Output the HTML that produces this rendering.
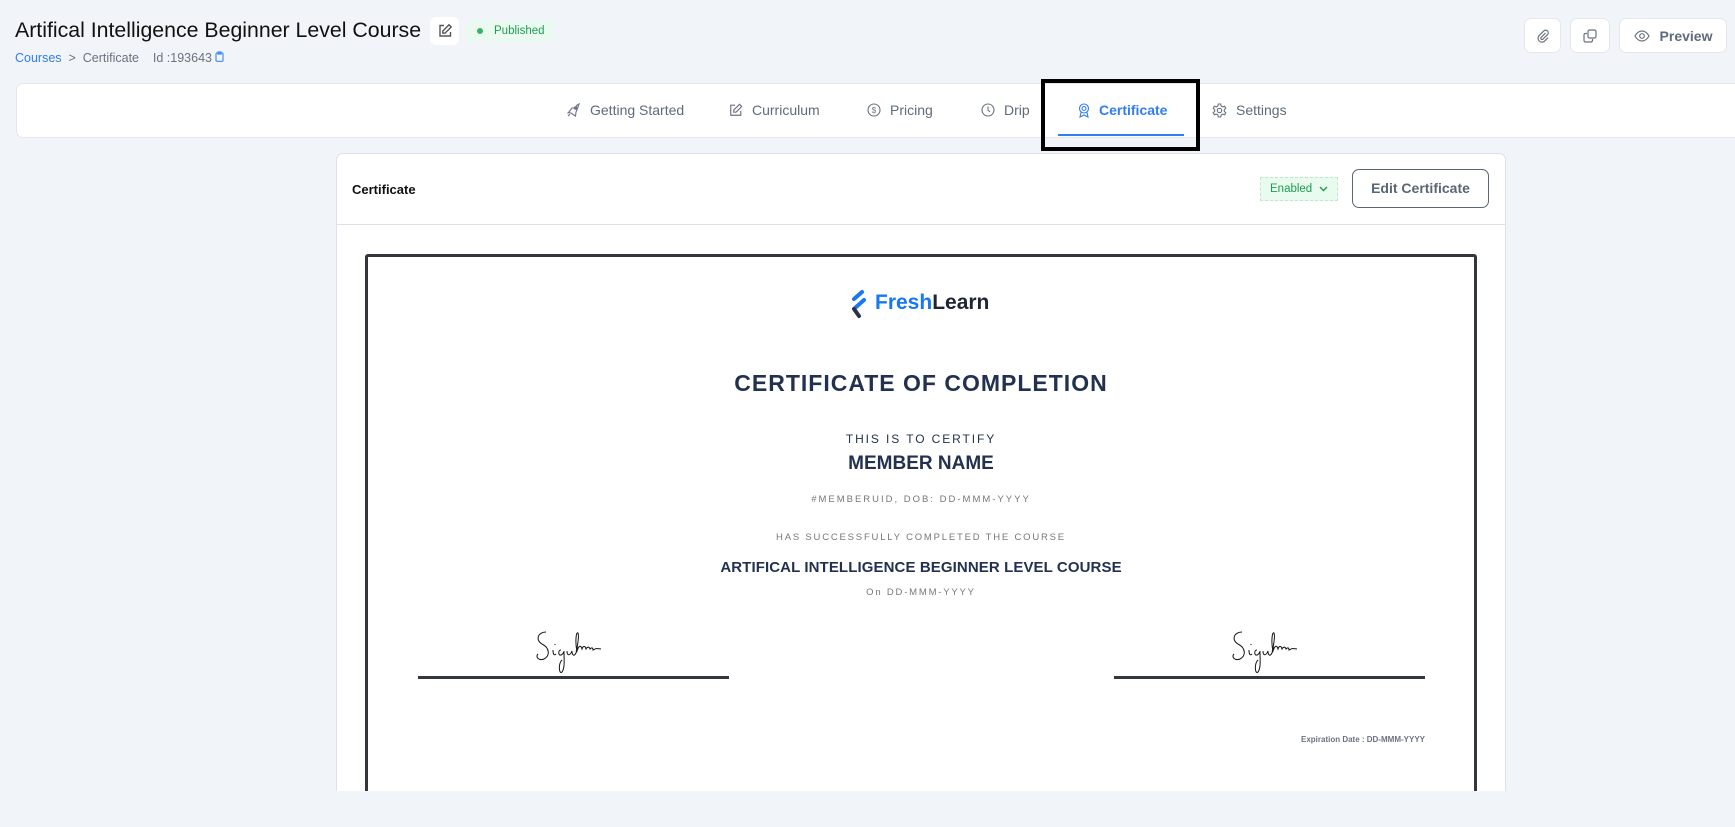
<!DOCTYPE html>
<html><head><meta charset="utf-8"><style>
*{box-sizing:border-box;margin:0;padding:0}
body{width:1735px;height:827px;overflow:hidden;background:#f1f4f9;font-family:"Liberation Sans",sans-serif;position:relative}
.a{position:absolute}
.btn{position:absolute;background:#fff;border:1px solid #e3e7ee;border-radius:7px;display:flex;align-items:center;justify-content:center}
.tab{position:absolute;top:101px;font-size:14px;color:#5f6b7a;display:flex;align-items:center;height:18px}
.tab svg{margin-right:9px}
.c{position:absolute;left:365px;width:1112px;text-align:center}
</style></head><body>
<div class="a" style="left:15px;top:18px;font-size:21.3px;color:#111;">Artifical Intelligence Beginner Level Course</div>
<div class="btn" style="left:430px;top:17px;width:29px;height:28px;border:none;border-radius:6px">
<svg width="16" height="16" viewBox="0 0 16 16" fill="none" stroke="#555" stroke-width="1.4"><path d="M7 2.5H3v10.5h10.5V9"/><path d="M12 1.8l2.2 2.2L8 10.2H5.8V8z"/></svg></div>
<div class="a" style="left:466px;top:20px;width:89px;height:22px;background:#eafaf0;border-radius:5px;font-size:11.5px;color:#1e9c55;line-height:22px;padding-left:28px"><span style="position:absolute;left:11px;top:8px;width:6px;height:6px;border-radius:50%;background:#3bb265"></span>Published</div>
<div class="a" style="left:15px;top:51px;font-size:12.5px;color:#6b7280"><span style="color:#2f7ff0">Courses</span>&nbsp;&nbsp;&gt;&nbsp;&nbsp;Certificate&nbsp;&nbsp;&nbsp;&nbsp;Id :193643 <svg width="9" height="11" viewBox="0 0 9 11" fill="none" stroke="#4a8cf0" stroke-width="1.2"><rect x="1" y="2" width="7" height="8.3" rx="1"/><path d="M3 1h3v2H3z"/></svg></div>

<div class="btn" style="left:1524px;top:18px;width:37px;height:35px"><svg width="14" height="14" viewBox="0 0 14 14" fill="none" stroke="#6b7280" stroke-width="1.2"><path d="M9.5 4L5 8.5a1.3 1.3 0 0 0 1.8 1.8L11.5 5.6a2.6 2.6 0 0 0-3.7-3.7L3 6.7a3.9 3.9 0 0 0 5.5 5.5L12 8.7"/></svg></div>
<div class="btn" style="left:1570px;top:18px;width:40px;height:35px"><svg width="14" height="14" viewBox="0 0 14 14" fill="none" stroke="#6b7280" stroke-width="1.2"><rect x="5" y="1" width="8" height="8" rx="1.5"/><path d="M4 4.5H2.5A1.5 1.5 0 0 0 1 6v5.5A1.5 1.5 0 0 0 2.5 13H8a1.5 1.5 0 0 0 1.5-1.5V10"/></svg></div>
<div class="btn" style="left:1619px;top:18px;width:108px;height:35px;font-size:14px;font-weight:bold;color:#5f6b7a"><svg width="16" height="12" viewBox="0 0 16 12" fill="none" stroke="#6b7280" stroke-width="1.2" style="margin-right:10px"><path d="M1 6c2-3.5 4.5-5 7-5s5 1.5 7 5c-2 3.5-4.5 5-7 5S3 9.5 1 6z"/><circle cx="8" cy="6" r="2.3"/></svg>Preview</div>

<div class="a" style="left:16px;top:83px;width:1730px;height:55px;background:#fff;border:1px solid #e3e7ee;border-radius:7px"></div>
<div class="tab" style="left:566px"><svg width="15" height="15" viewBox="0 0 15 15" fill="none" stroke="#6b7280" stroke-width="1.1"><path d="M5 10l-2.5-.5L6 5h4l.5-2.5L13 1l-1.5 4.5L10 9l-.5 4L5 10z"/><circle cx="9.5" cy="5" r="1.2"/><path d="M4 11l-2 2M2.5 9.5l-1 1"/></svg>Getting Started</div>
<div class="tab" style="left:729px"><svg width="14" height="14" viewBox="0 0 16 16" fill="none" stroke="#6b7280" stroke-width="1.3"><path d="M7 2.5H2v11.5h11.5V9"/><path d="M12 1.5l2.5 2.5L8 10.5H5.5V8z"/></svg>Curriculum</div>
<div class="tab" style="left:867px"><svg width="14" height="14" viewBox="0 0 14 14" fill="none" stroke="#6b7280" stroke-width="1.1"><circle cx="7" cy="7" r="6"/><text x="7" y="10" font-size="8" text-anchor="middle" fill="#6b7280" stroke="none" font-family="Liberation Sans">$</text></svg>Pricing</div>
<div class="tab" style="left:981px"><svg width="14" height="14" viewBox="0 0 14 14" fill="none" stroke="#6b7280" stroke-width="1.1"><circle cx="7" cy="7" r="6"/><path d="M7 3.5V7l2 2"/></svg>Drip</div>
<div class="tab" style="left:1078px;color:#2f7ff0;font-weight:bold"><svg width="12" height="15" viewBox="0 0 12 15" fill="none" stroke="#2f7ff0" stroke-width="1.1"><circle cx="6" cy="5.5" r="4.5"/><circle cx="6" cy="5.5" r="2"/><path d="M3 9.5L2 14l4-2 4 2-1-4.5"/></svg>Certificate</div>
<div class="tab" style="left:1212px"><svg width="15" height="15" viewBox="0 0 15 15" fill="none" stroke="#6b7280" stroke-width="1.1"><circle cx="7.5" cy="7.5" r="2.2"/><path d="M6.3 1h2.4l.4 2 1.6.9 1.9-.7 1.2 2.1-1.5 1.3v1.8l1.5 1.3-1.2 2.1-1.9-.7-1.6.9-.4 2H6.3l-.4-2-1.6-.9-1.9.7L1.2 9.7l1.5-1.3V6.6L1.2 5.3l1.2-2.1 1.9.7 1.6-.9z"/></svg>Settings</div>
<div class="a" style="left:1058px;top:134px;width:126px;height:2px;background:#2f7ff0"></div>
<div class="a" style="left:1041px;top:79px;width:159px;height:72px;border:4px solid #000"></div>

<div class="a" style="left:336px;top:153px;width:1170px;height:638px;background:#fff;border:1px solid #dde1e7;border-bottom:none;border-radius:7px 7px 0 0"></div>
<div class="a" style="left:337px;top:224px;width:1168px;height:1px;background:#dde1e7"></div>
<div class="a" style="left:352px;top:182px;font-size:13px;font-weight:bold;color:#111">Certificate</div>
<div class="a" style="left:1260px;top:177px;width:78px;height:24px;background:#e9faee;border:1px dashed #bfe8cc;font-size:11.5px;color:#1e9c55;line-height:22px;padding-left:9px">Enabled <svg width="9" height="6" viewBox="0 0 9 6" fill="none" stroke="#1e9c55" stroke-width="1.4" style="margin-left:4px"><path d="M1 1l3.5 3.5L8 1"/></svg></div>
<div class="a" style="left:1352px;top:169px;width:137px;height:39px;border:1px solid #5b6573;border-radius:7px;font-size:14px;font-weight:bold;color:#5b6573;text-align:center;line-height:37px">Edit Certificate</div>

<div class="a" style="left:365px;top:254px;width:1112px;height:560px;border:3px solid #33373d;border-radius:3px;background:#fff"></div>
<svg class="a" style="left:850px;top:290px" width="20" height="29" viewBox="0 0 20 29"><path d="M12 2L4 9" stroke="#1877f2" stroke-width="4" stroke-linecap="round"/><path d="M14 10L5 18" stroke="#1877f2" stroke-width="4" stroke-linecap="round"/><path d="M4 19l5 7" stroke="#2b3445" stroke-width="4" stroke-linecap="round"/></svg>
<div class="a" style="left:875px;top:291px;font-size:21px;font-weight:bold;color:#1e2535"><span style="color:#1877f2">Fresh</span>Learn</div>
<div class="c" style="top:370px;font-size:23px;font-weight:bold;color:#22314f;letter-spacing:1px">CERTIFICATE OF COMPLETION</div>
<div class="c" style="top:432px;font-size:12px;color:#22314f;letter-spacing:1.9px">THIS IS TO CERTIFY</div>
<div class="c" style="top:453px;font-size:19px;font-weight:bold;color:#22314f">MEMBER NAME</div>
<div class="c" style="top:494px;font-size:9.5px;color:#777;letter-spacing:2px">#MEMBERUID, DOB: DD-MMM-YYYY</div>
<div class="c" style="top:532px;font-size:9.5px;color:#777;letter-spacing:1.8px">HAS SUCCESSFULLY COMPLETED THE COURSE</div>
<div class="c" style="top:559px;font-size:15px;font-weight:bold;color:#22314f;letter-spacing:.1px">ARTIFICAL INTELLIGENCE BEGINNER LEVEL COURSE</div>
<div class="c" style="top:587px;font-size:9.5px;color:#777;letter-spacing:1.8px">On DD-MMM-YYYY</div>

<div class="a" style="left:418px;top:676px;width:311px;height:3px;background:#33373d"></div>
<div class="a" style="left:1114px;top:676px;width:311px;height:3px;background:#33373d"></div>
<svg class="a" style="left:534px;top:628px" width="80" height="50" viewBox="0 0 80 50" fill="none" stroke="#111" stroke-width="1"><path d="M12 4C4 4 1 12 8 16c8 4 8 12 2 15-5 2-9-2-6-5M19 22c0 4 1 6 3 4M21 16v1M27 22c-3 0-3 6 0 5 3-1 3-5 3-3 0 8 1 16-2 20-3 3-4-8 0-12M33 23c0 5 3 5 5 0 0 4 2 6 4 2 2-8 3-18 2-20-2-2-3 10-1 18 2-6 4-6 5-2 1-3 3-4 4 0 1-2 3-3 4 0 2-2 3-1 3 1 2-1 3-2 8-1"/></svg>
<svg class="a" style="left:1230px;top:628px" width="80" height="50" viewBox="0 0 80 50" fill="none" stroke="#111" stroke-width="1"><path d="M12 4C4 4 1 12 8 16c8 4 8 12 2 15-5 2-9-2-6-5M19 22c0 4 1 6 3 4M21 16v1M27 22c-3 0-3 6 0 5 3-1 3-5 3-3 0 8 1 16-2 20-3 3-4-8 0-12M33 23c0 5 3 5 5 0 0 4 2 6 4 2 2-8 3-18 2-20-2-2-3 10-1 18 2-6 4-6 5-2 1-3 3-4 4 0 1-2 3-3 4 0 2-2 3-1 3 1 2-1 3-2 8-1"/></svg>
<div class="a" style="left:1283px;top:735px;width:142px;text-align:right;font-size:8px;font-weight:bold;color:#6b7280">Expiration Date : DD-MMM-YYYY</div>
<div class="a" style="left:0;top:791px;width:1735px;height:36px;background:#f1f4f9"></div>
</body></html>
